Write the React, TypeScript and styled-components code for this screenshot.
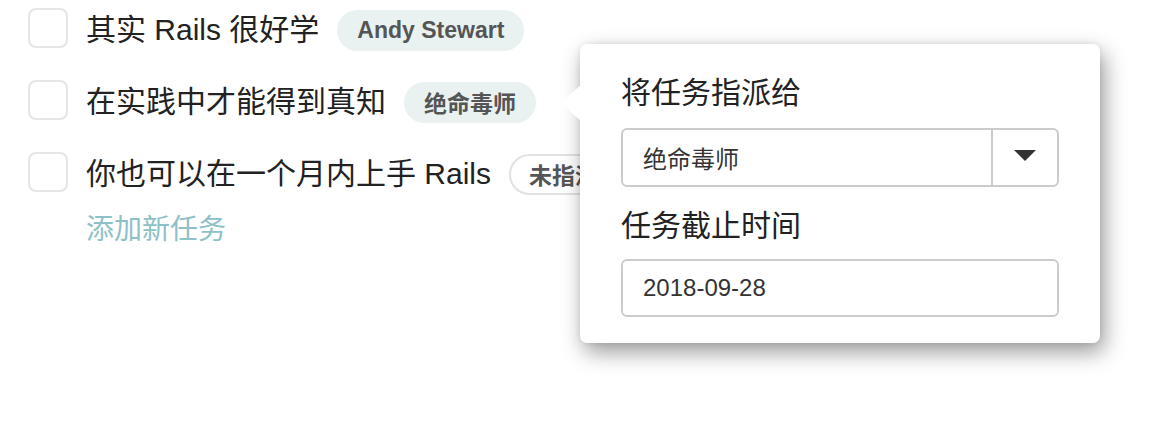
import React from "react";
import styled, { createGlobalStyle } from "styled-components";

type Task = {
    title: string;
    assignee: string | null;
};

const tasks: Task[] = [
    { title: "其实 Rails 很好学", assignee: "Andy Stewart" },
    { title: "在实践中才能得到真知", assignee: "绝命毒师" },
    { title: "你也可以在一个月内上手 Rails", assignee: null },
];

function App() {
    return (
        <>
            <GlobalStyle />
            <Page>
                <TaskList>
                    {tasks.map((task) => (
                        <TaskRow key={task.title}>
                            <CheckBox />
                            <TaskTitle>{task.title}</TaskTitle>
                            <Assignee empty={task.assignee === null}>
                                {task.assignee ?? "未指派"}
                            </Assignee>
                        </TaskRow>
                    ))}
                    <AddTask>添加新任务</AddTask>
                </TaskList>

                <Popover>
                    <Arrow />
                    <FieldLabel>将任务指派给</FieldLabel>
                    <SelectBox>
                        <SelectValue>绝命毒师</SelectValue>
                        <SelectToggle>
                            <Caret />
                        </SelectToggle>
                    </SelectBox>
                    <FieldLabel second>任务截止时间</FieldLabel>
                    <DateInput>2018-09-28</DateInput>
                </Popover>
            </Page>
        </>
    );
}

const GlobalStyle = createGlobalStyle`
    html, body {
        margin: 0;
        padding: 0;
        background: #ffffff;
    }
    body {
        font-family: "Liberation Sans", "Noto Sans CJK SC", sans-serif;
        color: #222222;
    }
`;

const Page = styled.div`
    position: relative;
    width: 1174px;
    height: 436px;
    overflow: hidden;
    background: #ffffff;
`;

const TaskList = styled.div`
    display: flex;
    flex-direction: column;
    padding: 8px 0 0 28px;
`;

const TaskRow = styled.div`
    display: flex;
    align-items: center;
    height: 40px;
    margin-bottom: 32px;

    &:nth-of-type(3) {
        margin-bottom: 18px;
    }
`;

const CheckBox = styled.div`
    width: 40px;
    height: 40px;
    box-sizing: border-box;
    border: 2px solid #e6e6e6;
    border-radius: 8px;
    background: #ffffff;
    flex-shrink: 0;
`;

const TaskTitle = styled.span`
    margin: 4px 0 0 18px;
    font-size: 30px;
    line-height: 40px;
    color: #222222;
    white-space: nowrap;
`;

const Assignee = styled.span<{ empty: boolean }>`
    display: inline-flex;
    align-items: center;
    height: 41px;
    box-sizing: border-box;
    margin: 4px 0 0 18px;
    padding: 0 18px;
    border-radius: 21px;
    font-size: 23px;
    font-weight: bold;
    color: #555555;
    white-space: nowrap;
    background: ${(p) => (p.empty ? "#ffffff" : "#e9f1f1")};
    border: 2px solid ${(p) => (p.empty ? "#e2e2e2" : "#e9f1f1")};
`;

const AddTask = styled.a`
    margin-left: 58px;
    font-size: 28px;
    line-height: 40px;
    color: #8dc1c7;
    cursor: pointer;
`;

const Popover = styled.div`
    position: absolute;
    left: 580px;
    top: 44px;
    width: 520px;
    box-sizing: border-box;
    padding: 28px 41px 26px;
    background: #ffffff;
    border-radius: 7px;
    box-shadow: 4px 9px 22px rgba(0, 0, 0, 0.4), 0 0 6px rgba(0, 0, 0, 0.08);
    display: flex;
    flex-direction: column;
`;

const Arrow = styled.div`
    position: absolute;
    left: -20px;
    top: 41px;
    width: 21px;
    height: 36px;
    background: #ffffff;
    clip-path: polygon(100% 0, 0 50%, 100% 100%);
    filter: drop-shadow(-1px 3px 3px rgba(0, 0, 0, 0.2));
`;

const FieldLabel = styled.div<{ second?: boolean }>`
    font-size: 30px;
    line-height: 42px;
    color: #222222;
    margin-top: ${(p) => (p.second ? "18px" : "0")};
    margin-bottom: ${(p) => (p.second ? "12px" : "14px")};
`;

const SelectBox = styled.div`
    display: flex;
    height: 59px;
    box-sizing: border-box;
    border: 2px solid #cccccc;
    border-radius: 6px;
    background: #ffffff;
`;

const SelectValue = styled.div`
    flex: 1;
    display: flex;
    align-items: center;
    padding-left: 20px;
    font-size: 24px;
    color: #333333;
`;

const SelectToggle = styled.div`
    width: 64px;
    display: flex;
    align-items: center;
    justify-content: center;
    border-left: 2px solid #cccccc;
`;

const Caret = styled.span`
    width: 0;
    height: 0;
    margin-top: -4px;
    border-left: 11px solid transparent;
    border-right: 11px solid transparent;
    border-top: 11px solid #333333;
`;

const DateInput = styled.div`
    display: flex;
    align-items: center;
    height: 58px;
    box-sizing: border-box;
    padding-left: 20px;
    border: 2px solid #cccccc;
    border-radius: 6px;
    font-size: 24px;
    color: #333333;
`;

export default App;
